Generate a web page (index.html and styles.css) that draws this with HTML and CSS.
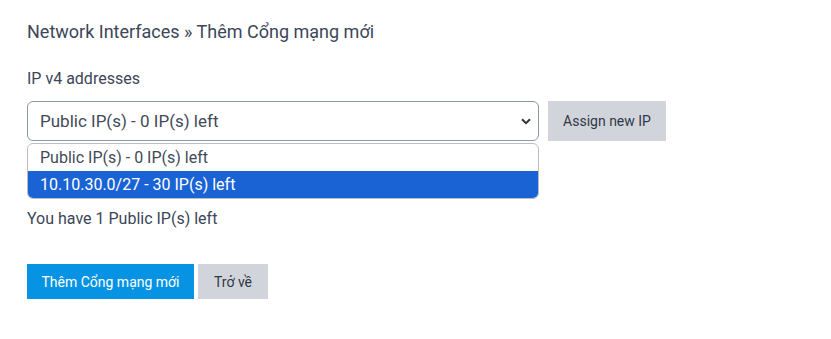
FILE: index.html
```html
<!DOCTYPE html>
<html lang="vi">
<head>
<meta charset="utf-8">
<title>Thêm Cổng mạng mới</title>
<link rel="stylesheet" href="styles.css">
</head>
<body>
<div class="page">
  <h1 class="title">Network Interfaces » Thêm Cổng mạng mới</h1>
  <div class="field">
    <label class="label">IP v4 addresses</label>
    <div class="row">
      <div class="select-wrap">
        <div class="select">
          <span>Public IP(s) - 0 IP(s) left</span>
          <svg class="chev" width="10" height="7" viewBox="0 0 10 7"><path d="M1 1.2 L5 5.2 L9 1.2" fill="none" stroke="#333" stroke-width="2"/></svg>
        </div>
        <ul class="listbox">
          <li class="opt">Public IP(s) - 0 IP(s) left</li>
          <li class="opt sel">10.10.30.0/27 - 30 IP(s) left</li>
        </ul>
      </div>
      <button class="btn btn-gray btn-assign">Assign new IP</button>
    </div>
    <p class="help">You have 1 Public IP(s) left</p>
  </div>
  <div class="actions">
    <button class="btn btn-blue">Thêm Cổng mạng mới</button>
    <button class="btn btn-gray">Trở về</button>
  </div>
</div>
</body>
</html>
```
FILE: styles.css
```css
* { box-sizing: border-box; }
html, body { margin: 0; padding: 0; background: #fff; }
body { font-family: Roboto, "Noto Sans", sans-serif; color: #3c4658; }
.page { padding: 20px 27px; }
.title { font-size: 18px; font-weight: 400; margin: 0 0 25px; line-height: 24px; color: #3c4658; }
.label { display: block; font-size: 16px; line-height: 20px; margin-bottom: 12px; }
.row { display: flex; gap: 9px; align-items: flex-start; }
.select-wrap { position: relative; width: 512px; }
.select { height: 40px; border: 1px solid #8e97a2; border-radius: 6px; display: flex; align-items: center; justify-content: space-between; padding: 0 7px 0 12px; font-size: 17px; color: #424a58; background: #fff; }
.chev { display: block; }
.listbox { position: absolute; left: 0; right: 0; top: 42px; margin: 0; padding: 0; list-style: none; background: #fff; border: 1px solid #b9bec5; border-radius: 6px; overflow: hidden; font-size: 16px; }
.opt { height: 27px; line-height: 27px; padding-left: 12px; color: #424a58; }
.opt.sel { background: #1a63d5; color: #fff; }
.btn { font-family: Roboto, "Noto Sans", sans-serif; border: 0; font-size: 14px; cursor: pointer; }
.btn-gray { background: #d1d5db; color: #303846; }
.btn-assign { height: 40px; width: 118px; }
.help { font-size: 16px; margin: 68px 0 0; line-height: 20px; }
.actions { display: flex; gap: 4px; margin-top: 35px; }
.actions .btn { height: 35px; padding: 0 10px; }
.btn-blue { background: #0793e3; color: #fff; width: 167px; }
.actions .btn-gray { width: 70px; }
```
